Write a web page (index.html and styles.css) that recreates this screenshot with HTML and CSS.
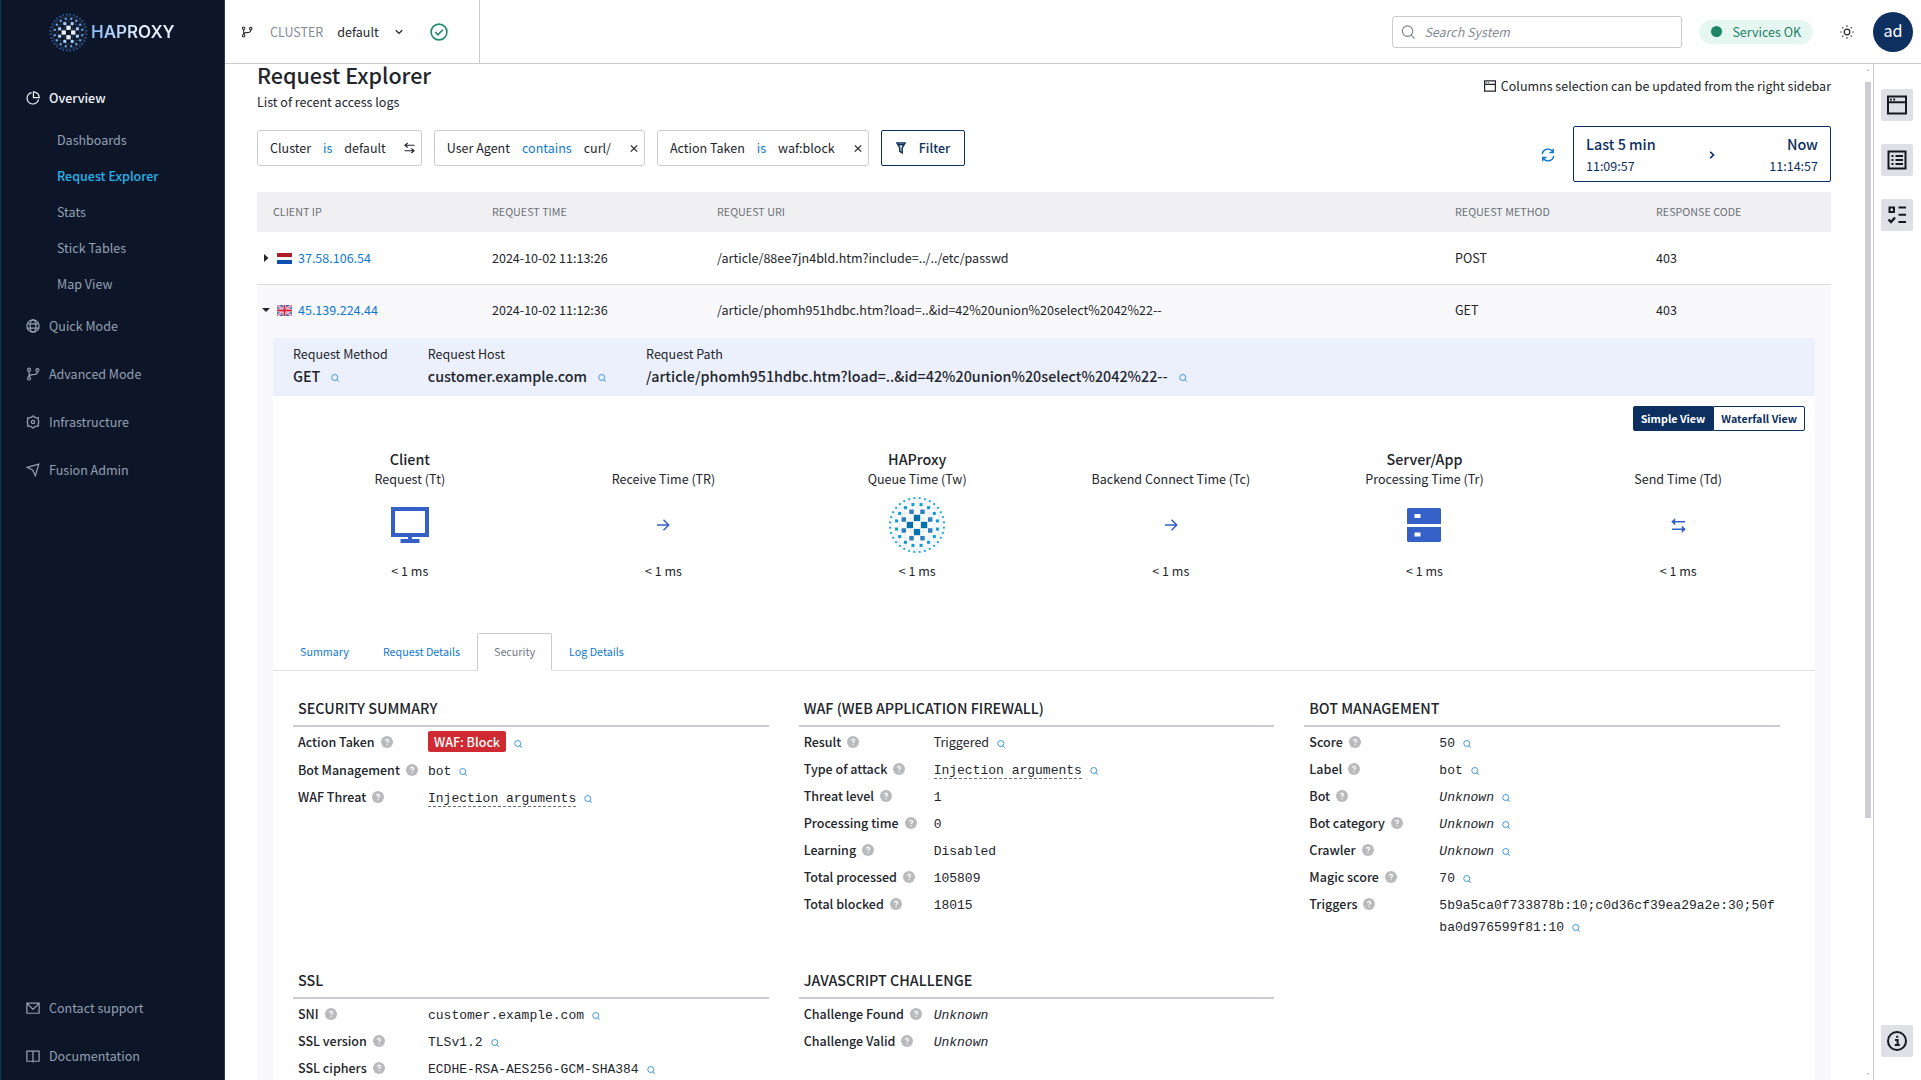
FILE: index.html
```html
<!DOCTYPE html>
<html lang="en">
<head>
<meta charset="utf-8">
<meta name="viewport" content="width=device-width, initial-scale=1">
<title>Request Explorer</title>
<link rel="stylesheet" href="styles.css">
</head>
<body>
<svg class="sprite" aria-hidden="true">
  <symbol id="i-search" viewBox="0 0 16 16"><circle cx="7.500" cy="7" r="6"/><path d="M11.500 11.200l4 4.300"/></symbol>
  <symbol id="i-help" viewBox="0 0 12 12"><circle cx="6" cy="6" r="6" fill="#b9babc" stroke="none"/><path d="M4.500 4.800a1.500 1.400 0 1 1 2.200 1.200c-.5.3-.7.500-.7.900M6 8.200v1.100" fill="none" stroke="#fff" stroke-width="1.300"/></symbol>
  <symbol id="i-branch" viewBox="0 0 16 16"><circle cx="3.500" cy="3" r="1.700"/><circle cx="3.500" cy="13" r="1.700"/><circle cx="13" cy="3.500" r="1.700"/><path d="M3.500 4.700v6.600M13 5.200c0 3.600-3 3.600-5.500 3.600-2 0-4 .4-4 2.500"/></symbol>
  <symbol id="i-arrow" viewBox="0 0 14 14"><path d="M1 7h11.500M7.500 1.800L12.700 7l-5.200 5.200"/></symbol>
  <symbol id="i-swap" viewBox="0 0 16 16"><path d="M2 4h13M1 12h13" /><path d="M4.500 0v8L.2 4zM11.500 8v8l4.300-4z" fill="currentColor" stroke="none"/></symbol>
  <symbol id="i-swap-thin" viewBox="0 0 12 12"><path d="M11.500 3H1M4 .5L1 3l3 2.500M.5 9H11M8 6.500L11 9l-3 2.500"/></symbol>
  <symbol id="i-close" viewBox="-1 -.5 9 9"><path d="M.8.8l6.400 6.400M7.200.8L.8 7.200"/></symbol>
  <symbol id="i-window" viewBox="0 0 20 20"><path d="M1 1.500h18v17H1zM1 7.300h18"/><path d="M3 3.600h1.800v1.800H3zM6.300 3.600h1.800v1.800H6.300z" fill="currentColor" stroke="none"/></symbol>
</svg>
<div class="app">
  <nav class="side" aria-label="Main">
    <a class="brand" href="#"><svg class="globe globe-light" viewBox="-30 -30 60 60" aria-hidden="true"></svg><span class="brand-name">HAPROXY</span></a>
    <ul class="menu">
      <li><a class="top current" href="#"><svg class="ico" viewBox="0 0 16 16"><path d="M6.500 1.800A6.600 6.600 0 1 0 14.300 9.600"/><path d="M8.500 1v6.600h6.700A6.700 6.700 0 0 0 8.500 1z"/></svg>Overview</a>
        <ul class="sub">
          <li><a href="#">Dashboards</a></li>
          <li><a class="active" href="#">Request Explorer</a></li>
          <li><a href="#">Stats</a></li>
          <li><a href="#">Stick Tables</a></li>
          <li><a href="#">Map View</a></li>
        </ul></li>
      <li><a class="top" href="#"><svg class="ico" viewBox="0 0 16 16"><circle cx="8" cy="8" r="7"/><ellipse cx="8" cy="8" rx="3.300" ry="7"/><path d="M1.500 5.600h13M1.500 10.400h13"/></svg>Quick Mode</a></li>
      <li><a class="top" href="#"><svg class="ico"><use href="#i-branch"/></svg>Advanced Mode</a></li>
      <li><a class="top" href="#"><svg class="ico" viewBox="0 0 16 16"><path d="M6.300 2.500L8 1l1.700 1.500 2.200.7 2.300.1-.3 2.500L14.700 8l-.8 2.200.3 2.500-2.300.1-2.200.7L8 15l-1.700-1.500-2.200-.7-2.300-.1.300-2.500L1.300 8l.8-2.200-.3-2.500 2.300-.1z"/><circle cx="8" cy="8" r="1.900"/></svg>Infrastructure</a></li>
      <li><a class="top" href="#"><svg class="ico" viewBox="0 0 16 16"><path d="M1.200 5L14.600 1.300 10.700 14.500 7.600 8z"/></svg>Fusion Admin</a></li>
    </ul>
    <ul class="menu foot">
      <li><a class="top" href="#"><svg class="ico" viewBox="0 0 16 16"><path d="M1 2.500h14v11.500H1zM1.500 3L8 9.500 14.500 3"/></svg>Contact support</a></li>
      <li><a class="top" href="#"><svg class="ico" viewBox="0 0 16 16"><path d="M8 2.500v13M8 2.500H1v11.500h7M8 2.500h7v11.500H8"/></svg>Documentation</a></li>
    </ul>
  </nav>

  <div class="main">
    <header class="bar">
      <div class="cluster">
        <svg class="ico"><use href="#i-branch"/></svg>
        <label for="cluster">CLUSTER</label>
        <span class="pick"><select id="cluster"><option>default</option></select><svg viewBox="0 0 8 6" class="chev"><path d="M.8 1.200L4 4.400l3.200-3.200"/></svg></span>
        <svg class="ok" viewBox="0 0 18 18"><circle cx="9" cy="9" r="7.900"/><path d="M5.200 9l2.800 2.800 4.800-5"/></svg>
      </div>
      <div class="tools">
        <label class="search"><svg class="lens"><use href="#i-search"/></svg><input type="search" placeholder="Search System" aria-label="Search System"></label>
        <span class="services"><i class="dot"></i>Services OK</span>
        <button class="bare sun" aria-label="Theme"><svg viewBox="0 0 14 14"><circle cx="7" cy="7" r="2.800"/><path d="M7 .3v1.400M7 12.300v1.400M.3 7h1.400M12.300 7h1.400M2.300 2.300l1 1M10.700 10.700l1 1M2.300 11.700l1-1M10.700 3.300l1-1"/></svg></button>
        <button class="avatar">ad</button>
      </div>
    </header>

    <div class="stage">
      <main class="content">
        <div class="heading">
          <div><h1>Request Explorer</h1><p>List of recent access logs</p></div>
          <p class="note"><svg class="note-ico"><use href="#i-window"/></svg>Columns selection can be updated from the right sidebar</p>
        </div>
        <div class="filters">
          <div class="chip"><span>Cluster</span><a href="#">is</a><span>default</span><button class="bare end" aria-label="Change"><svg class="swap"><use href="#i-swap-thin"/></svg></button></div>
          <div class="chip"><span>User Agent</span><a href="#">contains</a><span>curl/</span><button class="bare end" aria-label="Remove"><svg class="x"><use href="#i-close"/></svg></button></div>
          <div class="chip"><span>Action Taken</span><a href="#">is</a><span>waf:block</span><button class="bare end" aria-label="Remove"><svg class="x"><use href="#i-close"/></svg></button></div>
          <button class="filter"><svg viewBox="0 0 10 12"><path d="M1 1h8L6.200 6v4.800L3.800 9.300V6zM2.500 2.800h5"/></svg>Filter</button>
          <button class="bare refresh" aria-label="Refresh"><svg viewBox="0 0 16 16"><path d="M1.500 7A6.500 6.500 0 0 1 13.500 4.400M14.500 9a6.500 6.500 0 0 1-12 2.600M14 .8v4.400H9.600M2 15.200v-4.400h4.400"/></svg></button>
          <button class="range"><span class="when"><b>Last 5 min</b><span>11:09:57</span></span><svg viewBox="0 0 6 8"><path d="M1.200.8L4.600 4 1.200 7.200"/></svg><span class="when to"><b>Now</b><span>11:14:57</span></span></button>
        </div>

        <table class="logs">
          <colgroup><col class="c-ip"><col class="c-time"><col><col class="c-method"><col class="c-code"></colgroup>
          <thead><tr><th>CLIENT IP</th><th>REQUEST TIME</th><th>REQUEST URI</th><th>REQUEST METHOD</th><th>RESPONSE CODE</th></tr></thead>
          <tbody>
            <tr><td class="ip"><div><button class="bare caret" aria-label="Expand"><svg viewBox="0 0 12 12"><path d="M4 2l4.500 4L4 10z"/></svg></button><svg class="flag" viewBox="0 0 15 11"><path fill="#f4f4f4" d="M0 0h15v11H0z"/><path fill="#ae1c28" d="M0 0h15v4H0z"/><path fill="#0b4fb3" d="M0 7h15v4H0z"/></svg><a href="#">37.58.106.54</a></div></td><td>2024-10-02 11:13:26</td><td>/article/88ee7jn4bld.htm?include=../../etc/passwd</td><td>POST</td><td>403</td></tr>
            <tr class="open"><td class="ip"><div><button class="bare caret" aria-label="Collapse"><svg viewBox="0 0 12 12"><path d="M2 4h8L6 8z"/></svg></button><svg class="flag" viewBox="0 0 15 11"><path fill="#3f62b8" d="M0 0h15v11H0z"/><path d="M0 0l15 11M15 0L0 11" stroke="#fff" stroke-width="2.200"/><path d="M0 0l15 11M15 0L0 11" stroke="#d8203c" stroke-width=".8"/><path d="M7.500 0v11M0 5.500h15" stroke="#fff" stroke-width="3.400"/><path d="M7.500 0v11M0 5.500h15" stroke="#d8203c" stroke-width="2"/></svg><a href="#">45.139.224.44</a></div></td><td>2024-10-02 11:12:36</td><td>/article/phomh951hdbc.htm?load=..&amp;id=42%20union%20select%2042%22--</td><td>GET</td><td>403</td></tr>
            <tr class="detail"><td colspan="5"><div class="panel">
              <dl class="banner">
                <div><dt>Request Method</dt><dd>GET<a class="q" href="#" aria-label="Filter"><svg><use href="#i-search"/></svg></a></dd></div>
                <div><dt>Request Host</dt><dd>customer.example.com<a class="q" href="#" aria-label="Filter"><svg><use href="#i-search"/></svg></a></dd></div>
                <div><dt>Request Path</dt><dd>/article/phomh951hdbc.htm?load=..&amp;id=42%20union%20select%2042%22--<a class="q" href="#" aria-label="Filter"><svg><use href="#i-search"/></svg></a></dd></div>
              </dl>
              <div class="views"><button class="on">Simple View</button><button>Waterfall View</button></div>
              <div class="steps">
                <div class="step"><h2>Client</h2><p>Request (Tt)</p><div class="pic"><svg class="pc" viewBox="0 0 38 36"><path d="M2 2h34v26H2zM19 28v6" fill="none" stroke="currentColor" stroke-width="4"/><path d="M9.500 32h19v4h-19z" fill="currentColor"/></svg></div><p>&lt; 1 ms</p></div>
                <div class="step"><h2></h2><p>Receive Time (TR)</p><div class="pic"><svg class="arrow"><use href="#i-arrow"/></svg></div><p>&lt; 1 ms</p></div>
                <div class="step"><h2>HAProxy</h2><p>Queue Time (Tw)</p><div class="pic"><svg class="globe globe-blue" viewBox="-30 -30 60 60" aria-hidden="true"></svg></div><p>&lt; 1 ms</p></div>
                <div class="step"><h2></h2><p>Backend Connect Time (Tc)</p><div class="pic"><svg class="arrow"><use href="#i-arrow"/></svg></div><p>&lt; 1 ms</p></div>
                <div class="step"><h2>Server/App</h2><p>Processing Time (Tr)</p><div class="pic"><svg class="srv" viewBox="0 0 34 34"><path fill="currentColor" fill-rule="evenodd" d="M1 0h32l1 1v15H0V1zM7.500 6v4h6V6zM0 19h34v14l-1 1H1l-1-1zM7.500 24.500v4h6v-4z"/></svg></div><p>&lt; 1 ms</p></div>
                <div class="step"><h2></h2><p>Send Time (Td)</p><div class="pic"><svg class="send"><use href="#i-swap"/></svg></div><p>&lt; 1 ms</p></div>
              </div>
              <div class="tabs"><a href="#">Summary</a><a href="#">Request Details</a><a class="sel" href="#">Security</a><a href="#">Log Details</a></div>
              <div class="cards">
                <section><h3>SECURITY SUMMARY</h3><dl>
                  <div class="tall"><dt>Action Taken<svg><use href="#i-help"/></svg></dt><dd><span class="badge">WAF: Block</span><a class="q" href="#" aria-label="Filter"><svg><use href="#i-search"/></svg></a></dd></div>
                  <div><dt>Bot Management<svg><use href="#i-help"/></svg></dt><dd>bot<a class="q" href="#" aria-label="Filter"><svg><use href="#i-search"/></svg></a></dd></div>
                  <div><dt>WAF Threat<svg><use href="#i-help"/></svg></dt><dd><abbr>Injection arguments</abbr><a class="q" href="#" aria-label="Filter"><svg><use href="#i-search"/></svg></a></dd></div>
                </dl></section>
                <section><h3>WAF (WEB APPLICATION FIREWALL)</h3><dl>
                  <div><dt>Result<svg><use href="#i-help"/></svg></dt><dd class="sans">Triggered<a class="q" href="#" aria-label="Filter"><svg><use href="#i-search"/></svg></a></dd></div>
                  <div><dt>Type of attack<svg><use href="#i-help"/></svg></dt><dd><abbr>Injection arguments</abbr><a class="q" href="#" aria-label="Filter"><svg><use href="#i-search"/></svg></a></dd></div>
                  <div><dt>Threat level<svg><use href="#i-help"/></svg></dt><dd>1</dd></div>
                  <div><dt>Processing time<svg><use href="#i-help"/></svg></dt><dd>0</dd></div>
                  <div><dt>Learning<svg><use href="#i-help"/></svg></dt><dd>Disabled</dd></div>
                  <div><dt>Total processed<svg><use href="#i-help"/></svg></dt><dd>105809</dd></div>
                  <div><dt>Total blocked<svg><use href="#i-help"/></svg></dt><dd>18015</dd></div>
                </dl></section>
                <section><h3>BOT MANAGEMENT</h3><dl>
                  <div><dt>Score<svg><use href="#i-help"/></svg></dt><dd>50<a class="q" href="#" aria-label="Filter"><svg><use href="#i-search"/></svg></a></dd></div>
                  <div><dt>Label<svg><use href="#i-help"/></svg></dt><dd>bot<a class="q" href="#" aria-label="Filter"><svg><use href="#i-search"/></svg></a></dd></div>
                  <div><dt>Bot<svg><use href="#i-help"/></svg></dt><dd><em>Unknown</em><a class="q" href="#" aria-label="Filter"><svg><use href="#i-search"/></svg></a></dd></div>
                  <div><dt>Bot category<svg><use href="#i-help"/></svg></dt><dd><em>Unknown</em><a class="q" href="#" aria-label="Filter"><svg><use href="#i-search"/></svg></a></dd></div>
                  <div><dt>Crawler<svg><use href="#i-help"/></svg></dt><dd><em>Unknown</em><a class="q" href="#" aria-label="Filter"><svg><use href="#i-search"/></svg></a></dd></div>
                  <div><dt>Magic score<svg><use href="#i-help"/></svg></dt><dd>70<a class="q" href="#" aria-label="Filter"><svg><use href="#i-search"/></svg></a></dd></div>
                  <div><dt>Triggers<svg><use href="#i-help"/></svg></dt><dd>5b9a5ca0f733878b:10;c0d36cf39ea29a2e:30;50fba0d976599f81:10<a class="q" href="#" aria-label="Filter"><svg><use href="#i-search"/></svg></a></dd></div>
                </dl></section>
                <section><h3>SSL</h3><dl>
                  <div><dt>SNI<svg><use href="#i-help"/></svg></dt><dd>customer.example.com<a class="q" href="#" aria-label="Filter"><svg><use href="#i-search"/></svg></a></dd></div>
                  <div><dt>SSL version<svg><use href="#i-help"/></svg></dt><dd>TLSv1.2<a class="q" href="#" aria-label="Filter"><svg><use href="#i-search"/></svg></a></dd></div>
                  <div><dt>SSL ciphers<svg><use href="#i-help"/></svg></dt><dd>ECDHE-RSA-AES256-GCM-SHA384<a class="q" href="#" aria-label="Filter"><svg><use href="#i-search"/></svg></a></dd></div>
                </dl></section>
                <section><h3>JAVASCRIPT CHALLENGE</h3><dl>
                  <div><dt>Challenge Found<svg><use href="#i-help"/></svg></dt><dd><em>Unknown</em></dd></div>
                  <div><dt>Challenge Valid<svg><use href="#i-help"/></svg></dt><dd><em>Unknown</em></dd></div>
                </dl></section>
              </div>
            </div></td></tr>
          </tbody>
        </table>
      </main>
      <div class="rail" aria-hidden="true"><svg viewBox="0 0 6 4"><path d="M3 1l2 2H1z"/></svg><i class="thumb"></i><svg class="down" viewBox="0 0 6 4"><path d="M3 3L1 1h4z"/></svg></div>
      <aside class="dock">
        <button aria-label="Columns"><svg><use href="#i-window"/></svg></button>
        <button aria-label="List"><svg viewBox="0 0 20 20"><path d="M1.500 1.500h17v17h-17z"/><path d="M4.500 6h2M8.500 6h7.500M4.500 10h2M8.500 10h7.500M4.500 14h2M8.500 14h7.500"/></svg></button>
        <button aria-label="Checklist"><svg viewBox="0 0 20 20"><path d="M2.500 2.500h4.500v4.500H2.500zM11.500 2.500H19M11.500 9.700H19M11.500 17H19"/><path d="M1.500 14.500l2.500 2.500 4-4.500" stroke-width="2.400"/></svg></button>
        <button class="info" aria-label="Information"><svg viewBox="0 0 20 20"><circle cx="10" cy="10" r="9"/><path d="M8 9h2.600v5M7.800 14h5"/><path d="M9.200 4.800h2v2h-2z" fill="currentColor" stroke="none"/></svg></button>
      </aside>
    </div>
  </div>
</div>
<script src="globe.js"></script>
</body>
</html>
```

FILE: globe.js
```js
// Fills every .globe with concentric rings of squares joined by a fine web.
const RINGS = [
  { n: 4, r: 7.3, size: 6.6, start: 0 },
  { n: 8, r: 14.8, size: 4.6, start: 22.5 },
  { n: 16, r: 21.5, size: 3.1, start: 11.25 },
  { n: 32, r: 28, size: 2, start: 5.625 }
];
const NS = 'http://www.w3.org/2000/svg';
const points = ring => Array.from({ length: ring.n }, (_, i) => {
  const a = (ring.start + i * 360 / ring.n) * Math.PI / 180;
  return [ring.r * Math.cos(a), ring.r * Math.sin(a)];
});
document.querySelectorAll('.globe').forEach(svg => {
  let d = '';
  for (let k = 0; k < 3; k++) {
    const inner = points(RINGS[k]);
    const outer = points(RINGS[k + 1]);
    inner.forEach(p => outer
      .map(q => [Math.hypot(p[0] - q[0], p[1] - q[1]), q])
      .sort((a, b) => a[0] - b[0])
      .slice(0, 4)
      .forEach(([, q]) => { d += `M${p}L${q}`; }));
  }
  const web = document.createElementNS(NS, 'path');
  web.setAttribute('d', d);
  web.setAttribute('class', 'web');
  svg.append(web);
  RINGS.forEach((ring, k) => points(ring).forEach(([x, y]) => {
    const sq = document.createElementNS(NS, 'rect');
    sq.setAttribute('x', x - ring.size / 2);
    sq.setAttribute('y', y - ring.size / 2);
    sq.setAttribute('width', ring.size);
    sq.setAttribute('height', ring.size);
    sq.setAttribute('class', 'ring' + k);
    svg.append(sq);
  }));
});
```

FILE: styles.css
```css
:root {
  --ink: #22252b;
  --line: #cbcbd4;
  --navy: #0d3060;
  --link: #0f78cf;
  --sans: "Source Sans Pro", "Noto Sans CJK SC", sans-serif;
  --mono: "Liberation Mono", monospace;
}
* { box-sizing: border-box; }
body, h1, h2, h3, p, ul, dl, dd { margin: 0; padding: 0; }
body {
  font-family: var(--sans);
  font-size: 14px;
  font-size-adjust: 0.486;
  line-height: 20px;
  color: var(--ink);
  background: #fff;
}
ul { list-style: none; }
a { color: var(--link); text-decoration: none; }
button, input, select { font: inherit; font-size-adjust: inherit; color: inherit; }
button { cursor: pointer; }
svg { display: block; flex: none; fill: none; stroke: currentColor; }
.sprite { position: absolute; width: 0; height: 0; }
.bare { padding: 0; border: 0; background: none; }

.app { display: grid; grid-template: minmax(0, 1fr) / 225px minmax(0, 1fr); height: 100vh; overflow: hidden; }

/* left navigation */
.side { display: flex; flex-direction: column; background: #0d1628; border-left: 1px solid #103a52; border-right: 1px solid #2c3a52; }
.brand { display: flex; align-items: center; gap: 3px; height: 64px; padding-left: 48px; margin-bottom: 10px; }
.brand .globe { width: 39px; height: 39px; }
.brand-name {
  font: 600 17px/24px Inter, sans-serif;
  font-size-adjust: none;
  color: transparent;
  background: linear-gradient(90deg, #86b8f5, #e6effb 60%);
  background-clip: text;
}
.globe rect, .globe { stroke: none; }
.globe-light .web { stroke: #4a6288; stroke-width: .5; }
.globe-light .ring0 { fill: #e8f1fd; }
.globe-light .ring1 { fill: #a9cdf8; }
.globe-light .ring2 { fill: #6ba6ea; }
.globe-light .ring3 { fill: #3672c8; }
.globe-blue .web { stroke: #c3d3e2; stroke-width: .4; }
.globe-blue .ring0 { fill: #0073ab; }
.globe-blue .ring1 { fill: #2f7fc0; }
.globe-blue .ring2 { fill: #0a9dd8; }
.globe-blue .ring3 { fill: #1ba9de; }
.menu a { display: flex; align-items: center; color: #94a0b3; }
.menu .top { height: 48px; padding-left: 25px; gap: 9px; }
.menu .current { color: #f0f3f8; font-weight: 500; }
.ico { width: 14px; height: 14px; stroke-width: 1.400; }
.sub a { height: 36px; padding-left: 56px; }
.menu .active { color: #27b1ea; font-weight: 500; }
.foot { margin-top: auto; }

/* header */
.main { display: flex; flex-direction: column; min-width: 0; }
.bar { display: flex; justify-content: space-between; height: 64px; flex: none; border-bottom: 1px solid var(--line); }
.cluster { display: flex; align-items: center; width: 255px; padding-left: 16px; border-right: 1px solid var(--line); }
.cluster .ico { width: 12px; height: 12px; }
.cluster label { margin-left: 17px; color: #858b95; }
.pick { display: flex; align-items: center; margin-left: 14px; }
.pick select { appearance: none; width: 58px; padding: 0; border: 0; background: none; }
.chev { width: 8px; height: 6px; stroke-width: 1.300; }
.ok { width: 18px; height: 18px; margin-left: 27px; color: #1c8a6c; stroke-width: 1.600; }
.tools { display: flex; align-items: center; padding-right: 8px; }
.search { display: flex; align-items: center; width: 290px; height: 32px; padding: 0 8px; gap: 9px; border: 1px solid var(--line); border-radius: 3px; }
.lens { width: 14px; height: 14px; color: #7d828c; stroke-width: 1.300; }
.search input { flex: 1; min-width: 0; padding: 0; border: 0; outline: 0; background: none; }
.search input::placeholder { color: #858b95; font-style: italic; opacity: 1; }
.services { display: flex; align-items: center; gap: 10px; height: 24px; margin-left: 17px; padding: 0 12px; border-radius: 12px; background: #e6f6f0; color: #1d7f66; }
.dot { width: 11px; height: 11px; border-radius: 50%; background: #1c8567; }
.sun { margin: 0 19px 0 27px; }
.sun svg { width: 14px; height: 14px; stroke-width: 1.200; }
.avatar { width: 40px; height: 40px; padding: 0 0 4px; border: 0; border-radius: 50%; background: var(--navy); color: #fff; font-size: 18px; }

/* page body */
.stage { display: flex; flex: 1; min-height: 0; }
.content { flex: 1; min-width: 0; padding: 0 32px; overflow: hidden; }
.heading { display: flex; justify-content: space-between; align-items: flex-start; height: 66px; }
h1 { font-size: 24px; font-weight: 500; line-height: 22px; }
.heading div p { line-height: 32px; }
.note { display: flex; align-items: center; gap: 5px; margin-top: 12px; }
.note-ico { width: 12px; height: 12px; stroke-width: 2; }
.filters { display: flex; gap: 12px; align-items: flex-start; height: 62px; }
.chip { display: flex; align-items: center; gap: 12px; height: 36px; padding: 0 6px 0 12px; border: 1px solid var(--line); border-radius: 3px; }
.end { margin-left: 6px; }
.swap { width: 11px; height: 12px; stroke-width: 1.200; }
.x { width: 9px; height: 9px; stroke-width: 1.200; }
.filter { display: flex; align-items: center; gap: 13px; height: 36px; padding: 0 14px; border: 1px solid var(--navy); border-radius: 2px; background: #fff; color: var(--navy); font-weight: 500; }
.filter svg { width: 10px; height: 12px; stroke-width: 1.500; }
.refresh { margin: 18px 6px 0 auto; color: var(--link); }
.refresh svg { width: 14px; height: 14px; stroke-width: 1.600; }
.range { display: flex; justify-content: space-between; align-items: center; width: 258px; height: 56px; margin-top: -4px; padding: 1px 12px 0; border: 1px solid var(--navy); border-radius: 2px; background: #fff; color: var(--navy); }
.range svg { width: 6px; height: 8px; stroke-width: 1.600; }
.when { display: flex; flex-direction: column; text-align: left; line-height: 22px; }
.when b { font-size: 16px; font-weight: 500; }
.to { text-align: right; }

/* log table */
.logs { width: 100%; table-layout: fixed; border-collapse: separate; border-spacing: 0; }
.c-ip { width: 219px; }
.c-time { width: 225px; }
.c-method { width: 201px; }
.c-code { width: 191px; }
th { height: 40px; padding: 0 16px; background: #f0f0f2; color: #6b7079; font-size: 12px; font-weight: 400; text-align: left; }
td { height: 53px; padding: 0 16px; border-bottom: 1px solid #d8d9df; }
.ip { padding: 0 0 0 3px; }
.ip div { display: flex; align-items: center; }
.caret svg { width: 12px; height: 12px; fill: var(--ink); stroke: none; }
.flag { width: 15px; height: 11px; margin: 0 6px 0 5px; stroke: none; }
.open td { height: 53px; padding-bottom: 3px; border: 0; background: #f9f9fb; }
.detail td { padding: 0 16px; border: 0; background: #f9f9fb; vertical-align: top; }
.panel { background: #fff; padding-bottom: 40px; }
.banner { display: flex; height: 58px; padding: 4px 20px 0; gap: 40px; background: #ecf0fd; }
.banner dt { line-height: 24px; }
.banner dd { display: flex; align-items: center; gap: 11px; font-size: 16px; font-weight: 500; line-height: 20px; }
.q { display: inline-flex; color: #2b8bdb; }
.q svg { width: 8px; height: 8px; stroke-width: 1.800; }
.banner .q { margin-top: 4px; }
.views { display: flex; justify-content: flex-end; padding: 10px 10px 0 0; }
.views button { height: 25px; padding: 0 7px; border: 1px solid var(--navy); background: #fff; color: var(--navy); font-size: 12px; font-weight: 700; border-radius: 0 2px 2px 0; }
.views .on { background: var(--navy); color: #fff; border-radius: 2px 0 0 2px; }
.steps { display: grid; grid-template-columns: repeat(6, 1fr); padding: 18px 10px 52px; text-align: center; }
.step h2 { height: 20px; font-size: 16px; font-weight: 500; }
.pic { display: flex; align-items: center; justify-content: center; height: 72px; color: #3560c8; }
.pc { width: 38px; height: 36px; stroke: none; }
.arrow { width: 14px; height: 14px; stroke-width: 1.500; }
.pic .globe { width: 58px; height: 58px; }
.srv { width: 34px; height: 34px; stroke: none; }
.send { width: 15px; height: 15px; stroke-width: 1.500; }
.tabs { display: flex; padding-left: 10px; border-bottom: 1px solid #dcdde1; font-size: 12px; }
.tabs a { height: 38px; margin-bottom: -1px; padding: 0 16px; border: 1px solid transparent; line-height: 36px; }
.tabs .sel { border-color: var(--line) var(--line) #fff; border-radius: 2px 2px 0 0; color: #737880; background: #fff; }
.cards { display: grid; grid-template-columns: repeat(3, 1fr); gap: 29px 30px; padding: 26px 35px 0 20px; }
h3 { padding: 0 5px 6px; margin-bottom: 2px; border-bottom: 2px solid var(--line); font-size: 16px; font-weight: 500; line-height: 22px; }
.cards dl div { display: grid; grid-template-columns: 130px minmax(0, 1fr); align-items: baseline; min-height: 27px; padding: 2px 5px 1px; line-height: 22px; }
.cards dl .tall { min-height: 28px; }
.cards dt { display: flex; align-items: center; gap: 6px; height: 22px; font-weight: 500; }
.cards dt svg { width: 12px; height: 12px; }
.cards dd { font-family: var(--mono); font-size: 13px; font-size-adjust: none; word-break: break-all; }
.cards dd.sans { font-family: var(--sans); font-size: 14px; font-size-adjust: 0.486; }
.cards .q { margin-left: 8px; vertical-align: -1px; }
abbr { border-bottom: 1px dashed #6a6e76; }
.badge { display: inline-block; height: 21px; padding: 0 6px; border-radius: 2px; background: #cf2a31; color: #fff; font-family: var(--sans); font-size: 14px; font-size-adjust: 0.486; font-weight: 500; line-height: 21px; }

/* scroll rail and right dock */
.rail { display: flex; flex-direction: column; align-items: center; width: 10px; padding: 4px 0; }
.rail svg { width: 6px; height: 4px; fill: var(--line); stroke: none; }
.thumb { width: 6px; height: 73%; margin-top: 10px; background: #cdcdd6; }
.down { margin-top: auto; }
.dock { display: flex; flex-direction: column; align-items: center; gap: 23px; width: 48px; padding: 25px 1px 23px 0; border-left: 1px solid var(--line); }
.dock button { display: grid; place-items: center; width: 32px; height: 32px; padding: 0; border: 0; border-radius: 2px; background: #dfe0e6; color: #17191d; }
.dock svg { width: 20px; height: 20px; stroke-width: 2; }
.info { margin-top: auto; }
```
